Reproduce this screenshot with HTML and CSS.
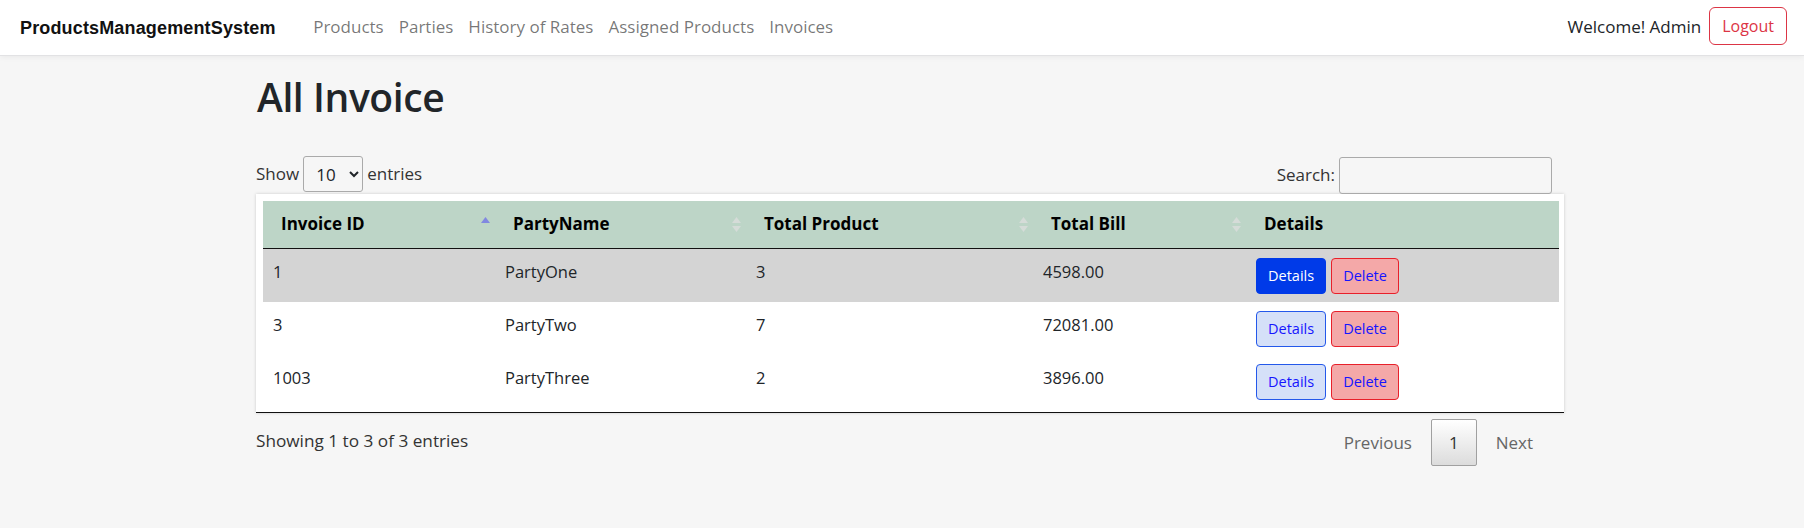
FILE: index.html
```html
<!DOCTYPE html>
<html lang="en">
<head>
<meta charset="utf-8">
<title>All Invoice</title>
<link rel="stylesheet" href="styles.css">
</head>
<body>
<nav class="navbar">
  <a class="brand" href="#">ProductsManagementSystem</a>
  <ul class="nav-links">
    <li><a href="#">Products</a></li>
    <li><a href="#">Parties</a></li>
    <li><a href="#">History of Rates</a></li>
    <li><a href="#">Assigned Products</a></li>
    <li><a href="#">Invoices</a></li>
  </ul>
  <div class="nav-right">
    <span class="welcome">Welcome! Admin</span>
    <button class="btn-logout">Logout</button>
  </div>
</nav>

<main class="container">
  <h1 class="title">All Invoice</h1>

  <div class="dt-top">
    <label class="dt-length">Show <select class="dt-select"><option>10</option><option>25</option><option>50</option></select> entries</label>
    <label class="dt-search">Search:<input class="dt-input" type="search"></label>
  </div>

  <div class="table-card">
    <table class="dt-table">
      <thead>
        <tr>
          <th class="c1">Invoice ID
            <span class="sort"><svg width="9" height="15" viewBox="0 0 9 15"><polygon points="4.5,0 9,6 0,6" fill="#8188e0"/></svg></span>
          </th>
          <th class="c2">PartyName
            <span class="sort"><svg width="9" height="15" viewBox="0 0 9 15"><polygon points="4.5,0 9,6 0,6" fill="#d5dcd8"/><polygon points="0,9 9,9 4.5,15" fill="#d5dcd8"/></svg></span>
          </th>
          <th class="c3">Total Product
            <span class="sort"><svg width="9" height="15" viewBox="0 0 9 15"><polygon points="4.5,0 9,6 0,6" fill="#d5dcd8"/><polygon points="0,9 9,9 4.5,15" fill="#d5dcd8"/></svg></span>
          </th>
          <th class="c4">Total Bill
            <span class="sort"><svg width="9" height="15" viewBox="0 0 9 15"><polygon points="4.5,0 9,6 0,6" fill="#d5dcd8"/><polygon points="0,9 9,9 4.5,15" fill="#d5dcd8"/></svg></span>
          </th>
          <th class="c5">Details</th>
        </tr>
      </thead>
      <tbody>
        <tr class="row-hover">
          <td>1</td><td>PartyOne</td><td>3</td><td>4598.00</td>
          <td class="actions"><button class="btn btn-details active">Details</button><button class="btn btn-delete">Delete</button></td>
        </tr>
        <tr>
          <td>3</td><td>PartyTwo</td><td>7</td><td>72081.00</td>
          <td class="actions"><button class="btn btn-details">Details</button><button class="btn btn-delete">Delete</button></td>
        </tr>
        <tr>
          <td>1003</td><td>PartyThree</td><td>2</td><td>3896.00</td>
          <td class="actions"><button class="btn btn-details">Details</button><button class="btn btn-delete">Delete</button></td>
        </tr>
      </tbody>
    </table>
  </div>

  <div class="dt-bottom">
    <div class="dt-info">Showing 1 to 3 of 3 entries</div>
    <div class="dt-paging">
      <span class="pg disabled">Previous</span>
      <span class="pg current">1</span>
      <span class="pg disabled">Next</span>
    </div>
  </div>
</main>
</body>
</html>
```
FILE: styles.css
```css
* { box-sizing: border-box; }

html, body {
  margin: 0;
  padding: 0;
}

body {
  background: #f6f6f6;
  font-family: "Open Sans", "Noto Sans", sans-serif;
  font-size: 17px;
  line-height: 24px;
  color: #212529;
}

/* NAVBAR */
.navbar {
  height: 55px;
  background: #ffffff;
  display: flex;
  align-items: center;
  padding: 0 17px 4px 20px;
  box-shadow: 0 1px 0 #e2e2e4, 0 2px 6px rgba(0, 0, 0, 0.06);
}

.brand {
  font-family: "Liberation Sans", Arial, sans-serif;
  font-weight: 700;
  font-size: 18px;
  letter-spacing: 0.15px;
  color: #111;
  text-decoration: none;
  padding-top: 4px;
}

.nav-links {
  list-style: none;
  margin: 0 0 0 30px;
  padding: 0;
  display: flex;
  padding-top: 2px;
}

.nav-links a {
  display: block;
  padding: 0 7.5px;
  color: rgba(0, 0, 0, 0.55);
  text-decoration: none;
  font-size: 17px;
}

.nav-right {
  margin-left: auto;
  display: flex;
  align-items: center;
  gap: 8px;
}

.welcome {
  font-size: 17px;
  color: #212529;
  padding-top: 2px;
}

.btn-logout {
  font-family: inherit;
  font-size: 16px;
  line-height: 24px;
  height: 38px;
  padding: 6px 12px;
  color: #dc3545;
  background: transparent;
  border: 1px solid #dc3545;
  border-radius: 6px;
}

/* MAIN */
.container {
  width: 1296px;
  margin: 0 auto;
  padding-top: 18px;
}

.title {
  margin: 0 0 35px 3px;
  font-size: 39px;
  line-height: 48px;
  font-weight: 600;
  letter-spacing: -0.4px;
  color: #212529;
}

.dt-top {
  height: 38px;
  display: flex;
  justify-content: space-between;
  align-items: flex-start;
  padding-left: 2px;
}

.dt-length {
  display: flex;
  align-items: center;
  height: 36px;
  color: #333;
}

.dt-select {
  width: 60px;
  height: 36px;
  margin: 0 4px;
  padding: 4px 4px 4px 8px;
  font-family: inherit;
  font-size: 17px;
  color: #212529;
  background: transparent;
  border: 1px solid #aaa;
  border-radius: 3px;
}

.dt-search {
  display: flex;
  align-items: center;
  margin-right: -2px;
  color: #333;
}

.dt-input {
  width: 213px;
  height: 37px;
  margin-left: 4px;
  margin-top: 1px;
  padding: 5px;
  background: transparent;
  border: 1px solid #aaa;
  border-radius: 3px;
  font-family: inherit;
  font-size: 16px;
}

/* TABLE CARD */
.table-card {
  width: 1308px;
  margin-left: 2px;
  background: #ffffff;
  padding: 7px 6px 4px 7px;
  border-bottom: 1px solid #111;
  box-shadow: 0 0 3px rgba(0, 0, 0, 0.18);
}

.dt-table {
  width: 1296px;
  border-collapse: collapse;
  table-layout: fixed;
}

.dt-table th {
  position: relative;
  height: 47px;
  padding: 0 18px;
  background: #bdd5c7;
  font-weight: 700;
  text-align: left;
  color: #000;
  border-bottom: 1px solid #111;
  vertical-align: middle;
}

.dt-table th.c1 { width: 232px; }
.dt-table th.c2 { width: 251px; }
.dt-table th.c3 { width: 287px; }
.dt-table th.c4 { width: 213px; }
.dt-table th.c5 { width: 313px; }

.sort {
  position: absolute;
  right: 5px;
  top: 16px;
  width: 9px;
  height: 15px;
  line-height: 0;
}

.dt-table td {
  height: 53px;
  padding: 11px 10px 8px;
  vertical-align: top;
  font-size: 16.5px;
  color: #212529;
}

.dt-table td.actions {
  padding: 9px 10px 8px;
}

.row-hover td {
  background: #d4d4d4;
}

.btn {
  height: 36px;
  padding: 0 11px;
  font-family: inherit;
  font-size: 14.5px;
  line-height: 34px;
  border-radius: 4px;
  border: 1px solid;
  vertical-align: top;
}

.btn + .btn { margin-left: 5px; }

.btn-details {
  background: #d5e0f8;
  border-color: #2458ea;
  color: #1515ff;
}

.btn-details.active {
  background: #003ae8;
  border-color: #003ae8;
  color: #ffffff;
}

.btn-delete {
  background: #f4a8a8;
  border-color: #e8202a;
  color: #1515ff;
}

/* BOTTOM */
.dt-bottom {
  display: flex;
  justify-content: space-between;
  align-items: flex-start;
  padding-left: 2px;
}

.dt-info {
  padding-top: 16px;
  color: #333;
  font-size: 17.2px;
}

.dt-paging {
  display: flex;
  margin-top: 6px;
}

.pg {
  display: block;
  padding: 11px 16px 10px;
  margin-left: 2px;
  border: 1px solid transparent;
  border-radius: 2px;
  color: #666;
}

.pg.current {
  color: #333;
  padding: 11px 17px 10px;
  border-color: #a0a0a0;
  background: linear-gradient(to bottom, #ffffff 0%, #dcdcdc 100%);
}
```
